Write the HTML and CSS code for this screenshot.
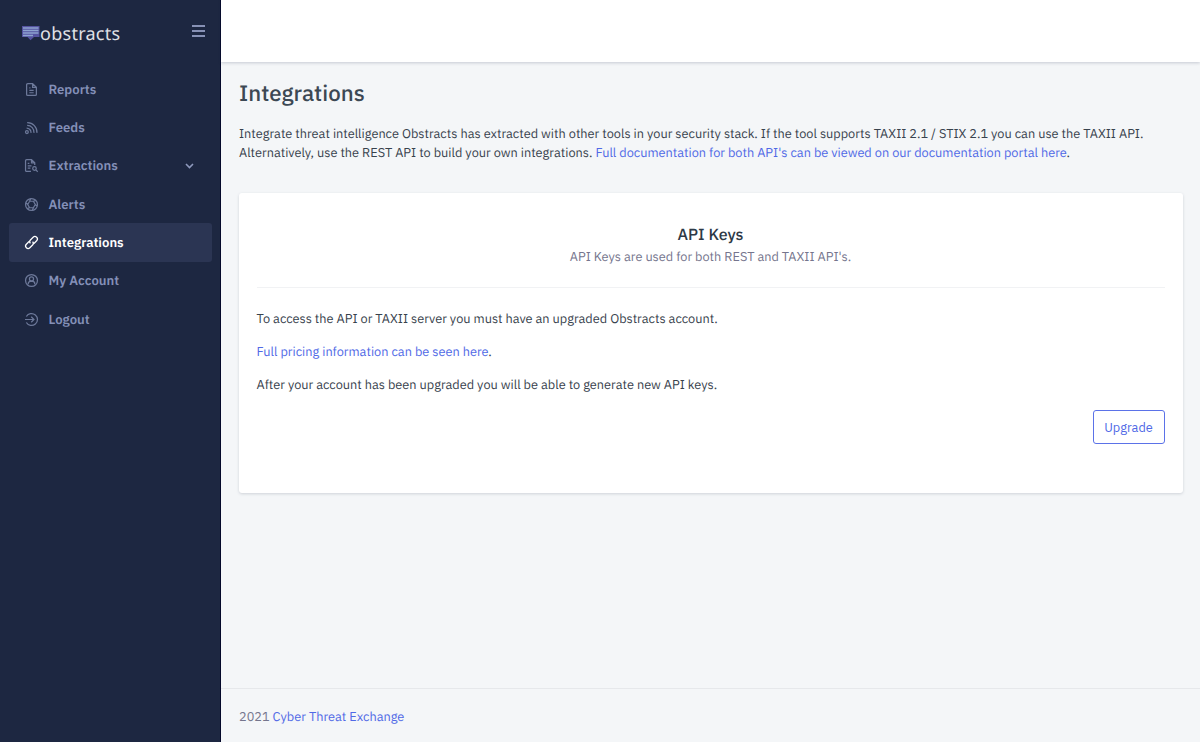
FILE: index.html
```html
<!DOCTYPE html>
<html lang="en">
<head>
<meta charset="utf-8">
<title>Integrations</title>
<link rel="stylesheet" href="styles.css">
</head>
<body>
<div class="app">
  <aside class="sidebar">
    <div class="brand">
      <a class="logo">
        <svg width="18" height="15" viewBox="0 0 18 15"><path d="M0 0h17.500v11h-5.500l-3.500 3.200-3-3.200H0z" fill="#5553a0"/><path d="M1 1.900h15.500M1 4.500h15.500M1 7.100h15.500M1 9.600h10" stroke="#8da3cf" stroke-width="1.500"/></svg>
        <span class="logo-text">obstracts</span>
      </a>
      <svg class="burger" width="13" height="12" viewBox="0 0 13 12"><path d="M0 1h13M0 6h13M0 11h13" stroke="#8791b5" stroke-width="2"/></svg>
    </div>
    <nav class="menu">
      <a class="item"><svg class="icon" viewBox="0 0 24 24"><path d="M14 1H5a2 2 0 0 0-2 2v18a2 2 0 0 0 2 2h14a2 2 0 0 0 2-2V8zM14 1v7h7M8 9h2M8 13.500h8M8 18h8"/></svg><span>Reports</span></a>
      <a class="item"><svg class="icon" viewBox="0 0 24 24"><circle cx="3.500" cy="20.500" r="2.600"/><path d="M3 13a8 8 0 0 1 8 9M4 8a12.500 12.500 0 0 1 12.500 14M4 3A17.500 17.500 0 0 1 22 22"/></svg><span>Feeds</span></a>
      <a class="item"><svg class="icon" viewBox="0 0 24 24"><path d="M11 23H3a2 2 0 0 1-2-2V3a2 2 0 0 1 2-2h9l6 6v4M12 1v6h6M5 8h3M5 12.500h7M5 17h5M20 20l3.500 3.500"/><circle cx="17.500" cy="17.500" r="3.300"/></svg><span>Extractions</span><svg class="chevron" width="9" height="6" viewBox="0 0 9 6"><path d="M1 1l3.500 3.500L8 1"/></svg></a>
      <a class="item"><svg class="icon" viewBox="0 0 24 24"><circle cx="12" cy="12" r="11"/><path d="M8.500 6h7l3.500 6-3.500 6h-7L5 12zM8.500 6l2-5M15.500 6l4.500-1.500M19 12l3.500 3M15.500 18l-2 5M8.500 18l-4.500 1.500M5 12l-3.500-3"/></svg><span>Alerts</span></a>
      <a class="item active"><svg class="icon" viewBox="0 0 24 24"><path d="M10 13.500a4.500 4.500 0 0 1 0-6.200l5-5a4.500 4.500 0 0 1 6.500 6.500l-4.500 4.500a4.500 4.500 0 0 1-3 1.200M14 10.500a4.500 4.500 0 0 1 0 6.200l-5 5a4.500 4.500 0 0 1-6.500-6.500l4.500-4.500a4.500 4.500 0 0 1 3-1.200"/></svg><span>Integrations</span></a>
      <a class="item"><svg class="icon" viewBox="0 0 24 24"><circle cx="12" cy="12" r="11"/><circle cx="12" cy="9" r="3.800"/><path d="M6 19v-1.500a4 4 0 0 1 4-4h4a4 4 0 0 1 4 4V19"/></svg><span>My Account</span></a>
      <a class="item"><svg class="icon" viewBox="0 0 24 24"><path d="M2.500 6.500a11 11 0 1 1 0 11M0 12h15.500M11.500 7l5 5-5 5"/></svg><span>Logout</span></a>
    </nav>
  </aside>
  <div class="page">
    <header class="topbar"></header>
    <main class="content">
      <h1 class="title">Integrations</h1>
      <p class="intro">Integrate threat intelligence Obstracts has extracted with other tools in your security stack. If the tool supports TAXII 2.1 / STIX 2.1 you can use the TAXII API.<br>Alternatively, use the REST API to build your own integrations. <a class="link">Full documentation for both API's can be viewed on our documentation portal here</a>.</p>
      <section class="card">
        <div class="card-head">
          <h2 class="card-title">API Keys</h2>
          <p class="card-sub">API Keys are used for both REST and TAXII API's.</p>
        </div>
        <p class="line">To access the API or TAXII server you must have an upgraded Obstracts account.</p>
        <p class="line"><a class="link">Full pricing information can be seen here</a>.</p>
        <p class="line">After your account has been upgraded you will be able to generate new API keys.</p>
        <div class="actions"><button class="upgrade">Upgrade</button></div>
      </section>
    </main>
    <footer class="footer">2021 <a class="link">Cyber Threat Exchange</a></footer>
  </div>
</div>
</body>
</html>
```
FILE: styles.css
```css
* { box-sizing: border-box; margin: 0; padding: 0; }
body { font: 400 12.740px/19px "IBM Plex Sans", Roboto, "Liberation Sans", sans-serif; color: #38424d; background: #f4f6f8; text-rendering: geometricPrecision; }
.app { display: flex; width: 100vw; height: 742px; overflow: hidden; }
.sidebar { width: 221px; flex: none; background: #1d2741; border-right: 1px solid #04082a; padding: 0 8px 0 9px; }
.brand { height: 70px; display: flex; justify-content: space-between; padding: 25px 7px 0 13px; }
.logo { display: flex; align-items: flex-start; }
.logo svg { margin-top: 1px; }
.logo-text { font: 400 18px/18px "Noto Sans", sans-serif; color: #e0e1e6; letter-spacing: .27px; }
.burger { display: block; }
.menu { display: flex; flex-direction: column; }
.item { height: 38.330px; padding: 0 18px 0 16px; display: flex; align-items: center; gap: 10.500px; border-radius: 3px; color: #8490b8; font-size: 13.150px; font-weight: 600; }
.icon { width: 13px; height: 13px; fill: none; stroke: #6d799a; stroke-width: 2.300; overflow: visible; }
.chevron { margin-left: auto; fill: none; stroke: #8e99bd; stroke-width: 1.600; }
.active { background: #2b3553; color: #fff; }
.active .icon { stroke: #fff; }
.page { flex: 1; display: flex; flex-direction: column; min-width: 0; }
.topbar { height: 62px; flex: none; background: #fff; box-shadow: 0 1px 3px rgba(40,50,80,.22); }
.content { flex: 1; padding: 17px 17.500px 0 18px; }
.title { font-size: 22.300px; line-height: 30px; font-weight: 500; color: #3c4854; }
.intro { margin-top: 15px; white-space: nowrap; }
.card { height: 300px; margin-top: 31px; padding: 0 18px 0 17.500px; background: #fff; border-radius: 3px; box-shadow: 0 1px 3px rgba(40,50,80,.18); }
.card-head { height: 95px; padding-top: 31px; margin-bottom: 21px; border-bottom: 1px solid #f1f2f4; text-align: center; }
.card-title { font-size: 16px; line-height: 22px; font-weight: 500; color: #2d3946; }
.card-sub { line-height: 21px; color: #75758d; }
.line { line-height: 20px; margin-bottom: 13px; }
.link { color: #5069e6; }
.actions { display: flex; justify-content: flex-end; margin-top: 15px; }
.upgrade { width: 72px; height: 34px; padding-top: 1px; border: 1px solid #5b72e8; border-radius: 3px; background: #fff; color: #5069e6; font: inherit; }
.footer { height: 54px; flex: none; padding: 18px 18px 0; border-top: 1px solid #e6e8eb; color: #75758d; }
```
